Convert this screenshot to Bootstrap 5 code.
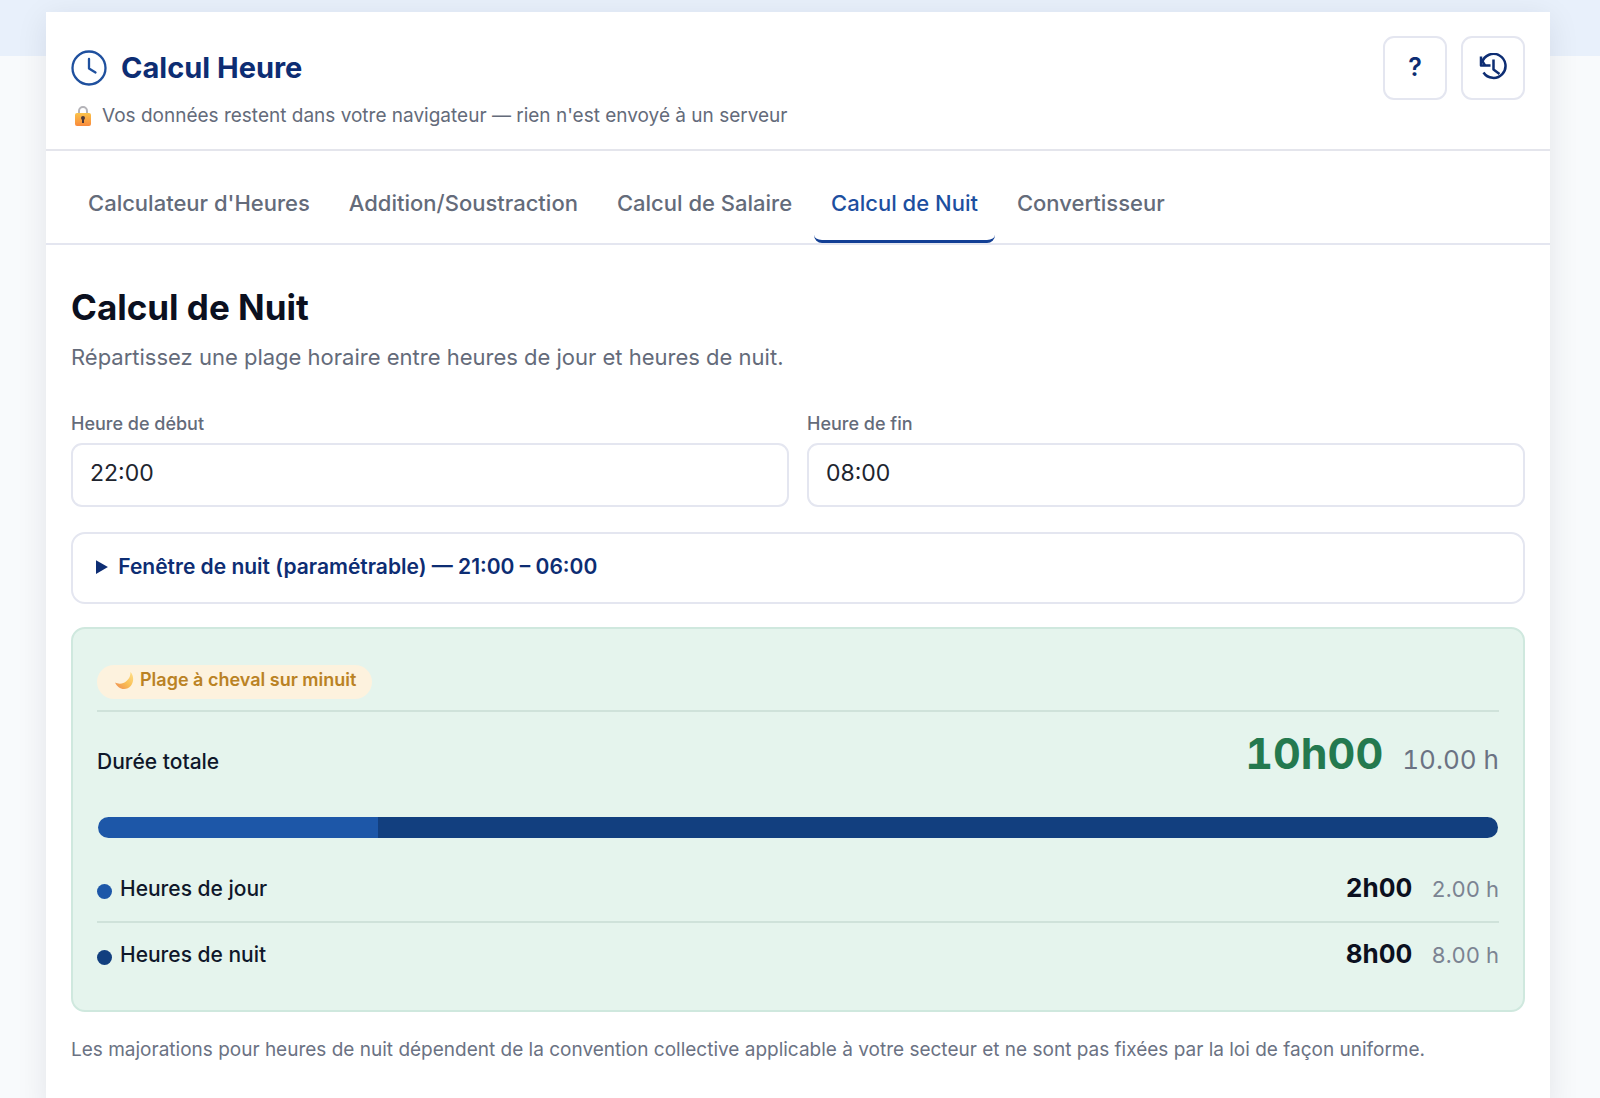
<!DOCTYPE html>
<html lang="fr">
<head>
<meta charset="utf-8">
<meta name="viewport" content="width=device-width, initial-scale=1">
<title>Calcul Heure</title>
<link href="https://cdn.jsdelivr.net/npm/bootstrap@5.3.0/dist/css/bootstrap.min.css" rel="stylesheet">
<style>
  :root { --navy: #0d2d73; --brand: #1d57a8; --night: #123f7f; --ink: #0f172a; --soft: #646b7a; --line: #e4e6f0; }
  body { font-family: Inter, "Liberation Sans", sans-serif; color: var(--ink); background: linear-gradient(#e8f0fb 56px, #f8fafc 56px); }
  .page-shell { padding: 12px 50px 0 46px; }
  .app-panel { background: #fff; box-shadow: 0 6px 30px rgba(15, 23, 42, .09); min-height: 100vh; }
  .app-head { padding: 24px 25px 21px; border-bottom: 2px solid #e4e5ec; }
  .app-title { font-size: 29px; line-height: 36px; font-weight: 700; color: var(--navy); gap: 14px; margin: 14px 0 18px; }
  .privacy { font-size: 19px; line-height: 24px; color: var(--soft); gap: 9px; }
  .head-tools { gap: 14px; }
  .tool-btn { width: 64px; height: 64px; padding: 0; border: 2px solid var(--line); border-radius: 11px; background: #fff; color: var(--navy); font-size: 25px; font-weight: 600; }
  .tool-btn:hover { background: #f3f6fb; color: var(--navy); border-color: var(--line); }
  .tab-row { padding: 22px 25px 0; border-bottom: 2px solid var(--line); gap: 5px; }
  .tab-row .nav-link { font-size: 22px; line-height: 32px; font-weight: 500; color: var(--soft); padding: 14px 17px 21px; border-bottom: 3px solid transparent; border-radius: 8px; }
  .tab-row .nav-link.active { color: #1d4f9f; border-bottom-color: #123f95; }
  .app-body { padding: 40px 25px; }
  .section-title { font-size: 35px; line-height: 44px; font-weight: 700; margin-bottom: 12px; color: #0b1020; }
  .section-lead { font-size: 22px; line-height: 32px; color: var(--soft); margin-bottom: 39px; }
  .field-row { --bs-gutter-x: 18px; margin-bottom: 25px; }
  .field-row .form-label { font-size: 18px; line-height: 24px; font-weight: 500; color: var(--soft); margin-bottom: 7px; }
  .field-row .form-control { height: 64px; font-size: 23px; padding: 0 17px 4px; border: 2px solid var(--line); border-radius: 11px; color: #20242e; }
  .night-window { border: 2px solid var(--line); border-radius: 14px; margin-bottom: 23px; }
  .night-window summary { font-size: 21px; line-height: 32px; font-weight: 600; color: var(--navy); padding: 17px 23px 19px; }
  .result-box { background: #e5f4ed; border: 2px solid #cfe8de; border-radius: 14px; padding: 36px 24px 23px; margin-bottom: 23px; }
  .tag-line { padding-bottom: 11px; border-bottom: 2px solid #cfe2da; }
  .span-tag { background: #fdf2de; color: #ba8224; font-size: 18px; line-height: 24px; font-weight: 600; padding: 3px 16px 7px 18px; gap: 6px; }
  .total-line { padding: 11px 0 34px; }
  .row-label { font-size: 21px; line-height: 32px; font-weight: 500; }
  .figure { font-variant-numeric: tabular-nums; gap: 19px; }
  .total-value { font-size: 43px; line-height: 60px; font-weight: 700; color: #24794f; }
  .total-decimal { font-size: 26px; color: #6b7283; }
  .split-bar { height: 21px; border-radius: 11px; margin: 0 1px 19px; }
  .bg-day { background: var(--brand); }
  .bg-night { background: var(--night); }
  .split-line { padding: 15px 0; }
  .split-line + .split-line { border-top: 2px solid #cfe2da; }
  .key-dot { width: 15px; height: 15px; margin-top: 4px; }
  .split-value { font-size: 26px; line-height: 32px; font-weight: 700; color: #0b1020; }
  .split-decimal { font-size: 22px; color: #7b8392; }
  .legal-note { font-size: 19px; line-height: 30px; color: #6b7283; }
</style>
<script defer src="https://cdn.jsdelivr.net/npm/bootstrap@5.3.0/dist/js/bootstrap.bundle.min.js"></script>
</head>
<body>
<div class="page-shell">
<main class="app-panel">
  <header class="app-head d-flex justify-content-between align-items-start">
    <div>
      <h1 class="app-title d-flex align-items-center">
        <svg width="36" height="36" viewBox="0 0 36 36" fill="none" stroke="#1f509e" stroke-width="2.300" stroke-linecap="round" stroke-linejoin="round" aria-hidden="true"><circle cx="18" cy="18" r="16.500"/><path d="M18 9v9.500l6.500 4"/></svg>
        Calcul Heure
      </h1>
      <p class="privacy d-flex align-items-center mb-0">
        <svg width="22" height="22" viewBox="0 0 22 22" aria-hidden="true"><defs><linearGradient id="lockBody" x1="0" y1="0" x2="0" y2="1"><stop offset="0" stop-color="#fbc34a"/><stop offset="1" stop-color="#f98a3c"/></linearGradient></defs><path d="M8 9V6a4 4 0 0 1 8 0v3" fill="none" stroke="#b4b3b8" stroke-width="2"/><rect x="4" y="8" width="16" height="13" rx="2" fill="url(#lockBody)"/><circle cx="12" cy="13" r="2" fill="#4d3837"/><path d="M11 13h2v5h-2z" fill="#4d3837"/></svg>
        <span>Vos données restent dans votre navigateur — rien n'est envoyé à un serveur</span>
      </p>
    </div>
    <div class="head-tools d-flex">
      <button type="button" class="btn tool-btn" aria-label="Aide">?</button>
      <button type="button" class="btn tool-btn d-flex align-items-center justify-content-center" aria-label="Historique">
        <svg width="30" height="30" viewBox="0 0 30 30" fill="none" stroke="currentColor" stroke-width="2.500" stroke-linejoin="round" aria-hidden="true"><path d="M5.500 19.500A12 12 0 1 0 4 9.500"/><path d="M3 3.500v9h9.500"/><path d="M3 6l4 6.500"/><path d="M15.500 6.500v10l6 4.500"/></svg>
      </button>
    </div>
  </header>

  <nav class="nav tab-row" aria-label="Outils">
    <a class="nav-link" href="#heures">Calculateur d'Heures</a>
    <a class="nav-link" href="#addition">Addition/Soustraction</a>
    <a class="nav-link" href="#salaire">Calcul de Salaire</a>
    <a class="nav-link active" aria-current="page" href="#nuit">Calcul de Nuit</a>
    <a class="nav-link" href="#convertisseur">Convertisseur</a>
  </nav>

  <section class="app-body" id="nuit">
    <h2 class="section-title">Calcul de Nuit</h2>
    <p class="section-lead">Répartissez une plage horaire entre heures de jour et heures de nuit.</p>

    <form class="row field-row">
      <div class="col-6">
        <label class="form-label d-block" for="debut">Heure de début</label>
        <input class="form-control" type="text" id="debut" value="22:00">
      </div>
      <div class="col-6">
        <label class="form-label d-block" for="fin">Heure de fin</label>
        <input class="form-control" type="text" id="fin" value="08:00">
      </div>
    </form>

    <details class="night-window">
      <summary>Fenêtre de nuit (paramétrable) — 21:00 – 06:00</summary>
    </details>

    <div class="result-box">
      <div class="tag-line d-flex">
        <span class="span-tag rounded-pill d-inline-flex align-items-center">
          <svg width="19" height="19" viewBox="0 0 19 19" aria-hidden="true"><defs><linearGradient id="moonFill" x1="1" y1="0" x2="0" y2="1"><stop offset="0" stop-color="#ffe08a"/><stop offset=".5" stop-color="#f9bf55"/><stop offset="1" stop-color="#ef8a52"/></linearGradient></defs><path d="M15.500 1C21 7 17.500 18 9 18 5 18 2 15.500 0 11.500c3 1.500 8 2 11.500-1.500C14.500 7.500 15.500 4.500 15.500 1z" fill="url(#moonFill)"/></svg>
          Plage à cheval sur minuit
        </span>
      </div>
      <div class="total-line d-flex justify-content-between align-items-baseline">
        <span class="row-label">Durée totale</span>
        <span class="figure d-flex align-items-baseline"><strong class="total-value">10h00</strong><span class="total-decimal">10.00 h</span></span>
      </div>
      <div class="split-bar d-flex overflow-hidden" role="img" aria-label="2 heures de jour, 8 heures de nuit">
        <div class="bg-day" style="width: 20%"></div>
        <div class="bg-night" style="width: 80%"></div>
      </div>
      <div class="split-line d-flex justify-content-between align-items-center">
        <span class="row-label d-flex align-items-center gap-2"><span class="key-dot bg-day rounded-circle"></span>Heures de jour</span>
        <span class="figure d-flex align-items-baseline"><strong class="split-value">2h00</strong><span class="split-decimal">2.00 h</span></span>
      </div>
      <div class="split-line d-flex justify-content-between align-items-center">
        <span class="row-label d-flex align-items-center gap-2"><span class="key-dot bg-night rounded-circle"></span>Heures de nuit</span>
        <span class="figure d-flex align-items-baseline"><strong class="split-value">8h00</strong><span class="split-decimal">8.00 h</span></span>
      </div>
    </div>

    <p class="legal-note mb-0">Les majorations pour heures de nuit dépendent de la convention collective applicable à votre secteur et ne sont pas fixées par la loi de façon uniforme.</p>
  </section>
</main>
</div>
</body>
</html>
